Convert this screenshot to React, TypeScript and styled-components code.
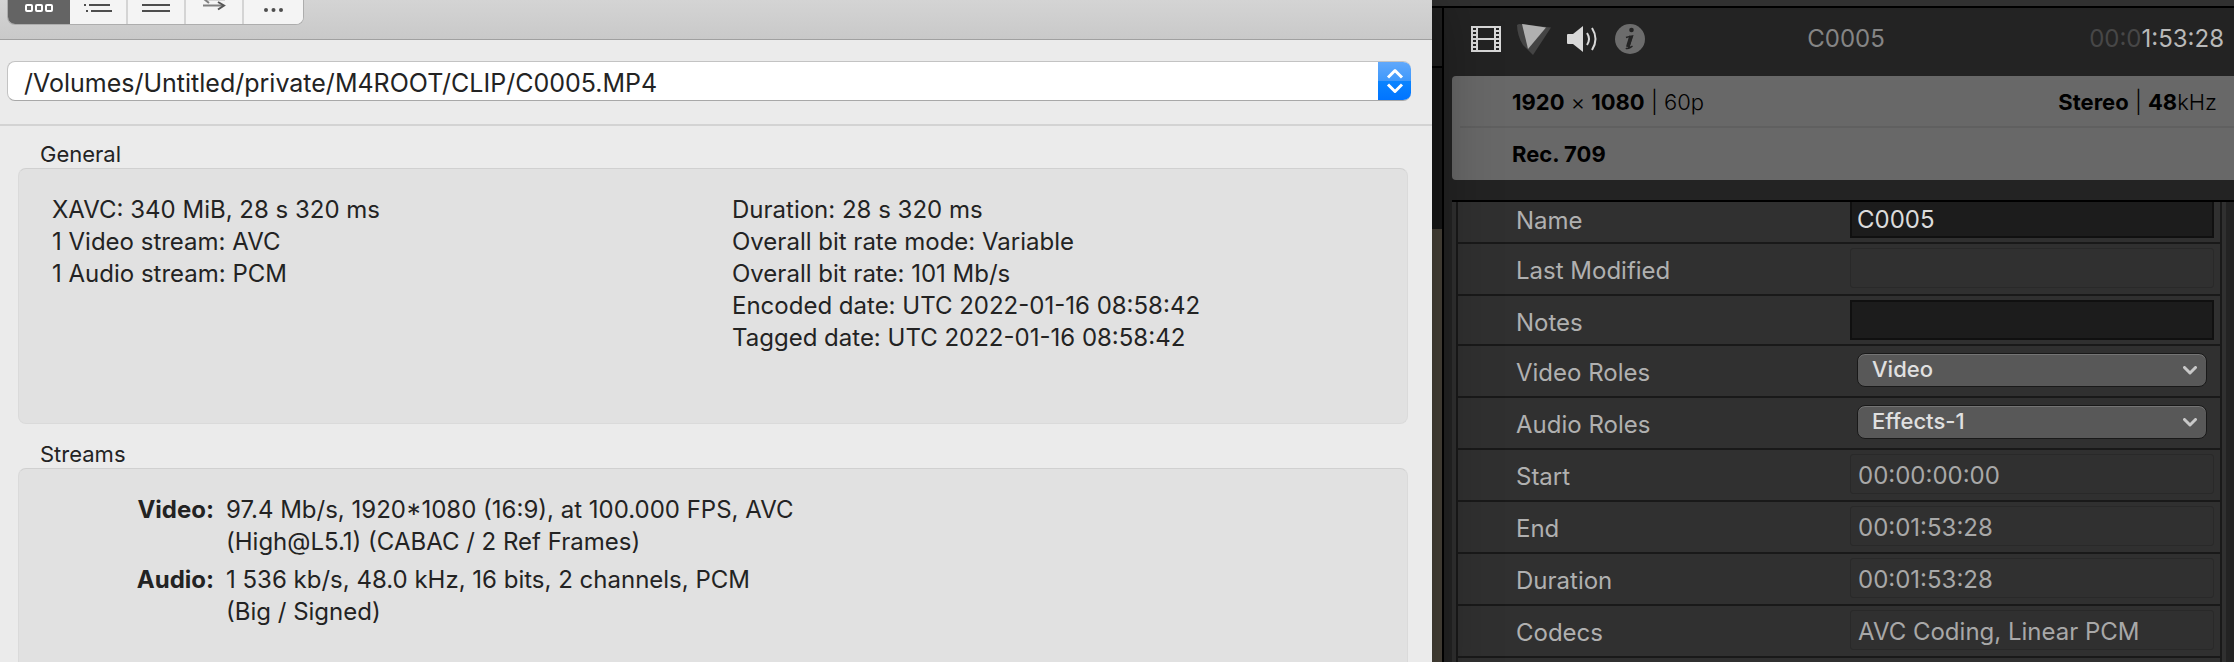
import React from "react";
import styled, { createGlobalStyle } from "styled-components";

const GlobalStyle = createGlobalStyle`
  *, *::before, *::after { box-sizing: border-box; }
  body { margin: 0; background: #232323; }
  button, input, select { font: inherit; color: inherit; margin: 0; padding: 0; border: 0; border-radius: 0; background: none; outline: none; }
  h1, h2, p, dl, dt, dd { margin: 0; font: inherit; }
`;

const Desktop = styled.div`
  display: grid;
  grid-template-columns: minmax(0, 179fr) 10px minmax(0, 99fr);
  height: 100vh;
  overflow: hidden;
  font-family: Inter, "Liberation Sans", sans-serif;
  font-size: 24px;
  line-height: 32px;
`;

/* Media info window */

const InfoWindow = styled.main`
  display: flex;
  flex-direction: column;
  position: relative;
  z-index: 1;
  background: #ebebeb;
  color: #232323;
  box-shadow: 0 0 60px rgba(0, 0, 0, 0.4);
`;

const Toolbar = styled.header`
  flex: none;
  height: 40px;
  padding-left: 7px;
  border-bottom: 1px solid #a0a0a0;
  background: linear-gradient(#d4d4d4, #c9c9c9);
`;

const Segments = styled.div`
  display: flex;
  width: 297px;
  height: 25px;
  overflow: hidden;
  border: 1px solid #adadad;
  border-top: 0;
  border-radius: 0 0 8px 8px;
  background: #f4f4f4;
`;

const Segment = styled.button<{ $active?: boolean }>`
  flex: none;
  width: 58px;
  display: flex;
  justify-content: center;
  background: ${(p) => (p.$active ? "#646464" : "#f4f4f4")};
  color: ${(p) => (p.$active ? "#fff" : "#4e4e4e")};
  & + & { border-right: 2px solid #d4d4d4; }
  &:first-child { width: 62px; }
  &:last-child { flex: 1; border-right: 0; }
`;

const PathBar = styled.div`
  flex: none;
  padding: 21px 21px 23px 7px;
  border-bottom: 2px solid #d3d3d3;
`;

const PathCombo = styled.div`
  display: flex;
  height: 40px;
  overflow: hidden;
  border: 1px solid #c3c3c3;
  border-bottom-color: #a8a8a8;
  border-right: 0;
  border-radius: 8px;
  background: #fff;
`;

const PathInput = styled.input`
  flex: 1;
  min-width: 0;
  padding: 4px 16px 0;
  font-size: 25px;
`;

const PathButton = styled.button`
  width: 33px;
  margin: -1px 0;
  display: flex;
  align-items: center;
  justify-content: center;
  background: linear-gradient(#62a9fb 0%, #3f98fb 50%, #0a84ff 50%, #0073ff 100%);
`;

const Group = styled.section<{ $fill?: boolean }>`
  display: flex;
  flex-direction: column;
  flex: ${(p) => (p.$fill ? "1 0 auto" : "none")};
  padding: ${(p) => (p.$fill ? "16px" : "14px")} 24px 0 18px;
`;

const GroupTitle = styled.h2`
  padding-left: 22px;
  font-size: 22px;
  line-height: 28px;
`;

const GroupBox = styled.div<{ $open?: boolean }>`
  flex: 1;
  min-height: ${(p) => (p.$open ? "194px" : "256px")};
  padding: 25px 33px 0;
  border: 1px solid #dadada;
  border-top-color: #d0d0d0;
  border-bottom-width: ${(p) => (p.$open ? "0" : "1px")};
  border-radius: ${(p) => (p.$open ? "8px 8px 0 0" : "8px")};
  background: #e1e1e1;
`;

const Columns = styled(GroupBox)`
  display: grid;
  grid-template-columns: 1fr 1fr;
  column-gap: 38px;
`;

const StreamList = styled.dl`
  display: grid;
  grid-template-columns: 162px 600px;
  column-gap: 12px;
  row-gap: 6px;
`;

const StreamName = styled.dt`
  font-weight: 700;
  text-align: right;
`;

/* Gap where the viewer behind shows through */

const ViewerEdge = styled.div`
  display: flex;
  flex-direction: column;
  background: #4a443a;
`;

const ViewerTop = styled.div`
  height: 8px;
  border-bottom: 2px solid #000;
  background: #303030;
`;

const ViewerBar = styled.div`
  height: 60px;
  border-bottom: 2px solid #000;
  background: #202020;
`;

const ViewerBlank = styled.div`
  height: 161px;
  background: #181818;
`;

/* Inspector */

const Inspector = styled.aside`
  display: flex;
  flex-direction: column;
  min-width: 0;
  background: #232323;
  color: #b0b0b0;
`;

const InspectorEdge = styled.div`
  flex: none;
  height: 8px;
  border-bottom: 2px solid #000;
  background: #303030;
`;

const InspectorBody = styled.div`
  flex: 1;
  min-height: 0;
  display: flex;
  flex-direction: column;
  padding-left: 8px;
  border-left: 2px solid #000;
`;

const InspectorHeader = styled.div`
  flex: none;
  display: grid;
  grid-template-columns: 1fr auto 1fr;
  align-items: center;
  height: 68px;
  padding: 0 10px 6px 16px;
`;

const Tabs = styled.div`
  display: flex;
  gap: 12px;
  button { display: flex; width: 36px; align-items: center; justify-content: center; }
`;

const ClipTitle = styled.h1`
  color: #858585;
`;

const Timecode = styled.div`
  justify-self: end;
  color: #b9b9b9;
  span { color: #474747; }
`;

const Summary = styled.div`
  flex: none;
  padding: 0 0 0 8px;
  border-radius: 4px 0 0 4px;
  background: #686868;
  color: #000;
  font-size: 22px;
  font-weight: 300;
`;

const SummaryRow = styled.div`
  display: flex;
  justify-content: space-between;
  height: 52px;
  padding: 10px 17px 0 52px;
  & + & { border-top: 2px solid #606060; margin-top: -2px; height: 54px; }
  strong { font-weight: 700; }
`;

const Properties = styled.div`
  flex: 1;
  min-height: 0;
  overflow: hidden;
  margin-top: 20px;
  border-top: 2px solid #000;
`;

/* The list is scrolled a little, so its first row starts above the top line. */
const PropertyList = styled.div`
  margin: -8px 8px 0 0;
  padding: 0 4px;
  background: #303030;
`;

const PropertyFrame = styled.div`
  border: 2px solid #191919;
  border-width: 0 2px;
`;

const PropertyRow = styled.div<{ $short?: boolean }>`
  display: grid;
  grid-template-columns: minmax(0, 392fr) minmax(0, 364fr);
  height: ${(p) => (p.$short ? "50px" : "52px")};
  padding-right: 6px;
  border-bottom: 2px solid #191919;
`;

const PropertyLabel = styled.label`
  padding: 11px 0 0 58px;
`;

const Field = styled.input<{ $editable?: boolean }>`
  height: 40px;
  margin-top: 4px;
  padding: 2px ${(p) => (p.$editable ? "5px" : "7px")} 0;
  border: ${(p) => (p.$editable ? "2px solid #101010" : "1px solid #292929")};
  border-radius: ${(p) => (p.$editable ? "0" : "3px")};
  background: ${(p) => (p.$editable ? "#1c1c1c" : "#303030")};
  color: ${(p) => (p.$editable ? "#dcdcdc" : "#a8a8a8")};
`;

const SelectWrap = styled.div`
  position: relative;
  height: 34px;
  margin: 7px 7px 0;
  svg { position: absolute; right: 10px; top: 13px; pointer-events: none; }
`;

const Select = styled.select`
  appearance: none;
  width: 100%;
  height: 34px;
  padding: 0 36px 2px 14px;
  border: 1px solid #191919;
  border-radius: 8px;
  background: #585858;
  box-shadow: inset 0 1px 0 #747474;
  color: #e0e0e0;
  font-size: 22px;
  font-weight: 500;
  line-height: 28px;
`;

const GridIcon = () => (
  <svg width="32" height="16" viewBox="0 0 32 16" fill="none" stroke="currentColor" strokeWidth="2">
    <rect x="3" y="5" width="6" height="6" rx="1" />
    <rect x="13" y="5" width="6" height="6" rx="1" />
    <rect x="23" y="5" width="6" height="6" rx="1" />
  </svg>
);

const ListIcon = () => (
  <svg width="28" height="16" viewBox="0 0 28 16" fill="currentColor">
    <path d="M0 4h2v2H0zM5 4h21v2H5zM2 10h2v2H2zM7 10h21v2H7z" />
  </svg>
);

const LinesIcon = () => (
  <svg width="28" height="16" viewBox="0 0 28 16" fill="currentColor">
    <path d="M0 4h28v2H0zM0 10h28v2H0z" />
  </svg>
);

const SwapIcon = () => (
  <svg width="24" height="16" viewBox="0 0 24 16" fill="none" stroke="#808080" strokeWidth="1">
    <path d="M5 0h18" stroke="#b5b5b5" />
    <path d="M2-1l5 4M1 5.500h20" strokeWidth="2" />
    <path d="M16 2l6 3.500-6 4" stroke="#555" strokeWidth="2" />
  </svg>
);

const DotsIcon = () => (
  <svg width="22" height="16" viewBox="0 0 22 16" fill="currentColor">
    <circle cx="3" cy="10" r="2" />
    <circle cx="10.500" cy="10" r="2" />
    <circle cx="18" cy="10" r="2" />
  </svg>
);

const UpDownIcon = () => (
  <svg width="18" height="26" viewBox="0 0 18 26" fill="none" stroke="#fff" strokeWidth="3">
    <path d="M2 9.500l7-7 7 7M2 16.500l7 7 7-7" strokeLinejoin="round" />
  </svg>
);

const FilmIcon = () => (
  <svg width="30" height="26" viewBox="0 0 30 26">
    <path
      fill="#d8d8d8"
      fillRule="evenodd"
      d="M0 0h30v26H0zM7 2v10h16V2zM7 14v10h16V14zM2 2v2h3V2zM2 6v2h3V6zM2 10v2h3v-2zM2 14v2h3v-2zM2 18v2h3v-2zM2 22v2h3v-2zM25 2v2h3V2zM25 6v2h3V6zM25 10v2h3v-2zM25 14v2h3v-2zM25 18v2h3v-2zM25 22v2h3v-2z"
    />
  </svg>
);

const ColorIcon = () => (
  <svg width="34" height="32" viewBox="0 0 34 32">
    <path d="M2 1L34 4.500 16 32 6 22C2 16 0 8 0 2z" fill="#444" />
    <path d="M5 1L29 4.500 11 26z" fill="#b0b0b0" />
  </svg>
);

const SpeakerIcon = () => (
  <svg width="30" height="26" viewBox="0 0 30 26" fill="none" stroke="#d8d8d8" strokeWidth="2">
    <path d="M0 9q0-1 1-1h5l10-8v26L6 18H1q-1 0-1-1z" fill="#d8d8d8" stroke="none" />
    <path d="M20 7q4 6 0 12M25 2q7 11 0 22" />
  </svg>
);

const InfoIcon = () => (
  <svg width="30" height="30" viewBox="0 0 30 30">
    <circle cx="15" cy="15" r="15" fill="#6c6c6c" />
    <circle cx="16.500" cy="6" r="2.300" fill="#232323" />
    <path d="M11 13.500q3-1 6.500-1.500L14 22.500q-1 3 3.500-.5M11 24q1 1.500 5-1" fill="none" stroke="#232323" strokeWidth="1.500" />
    <path d="M16 12l-3.300 11" stroke="#232323" strokeWidth="3.500" />
  </svg>
);

const ChevronIcon = () => (
  <svg width="14" height="10" viewBox="0 0 14 10" fill="none" stroke="#c8c8c8" strokeWidth="3">
    <path d="M1.500 1.500L7 7l5.500-5.500" strokeLinecap="round" strokeLinejoin="round" />
  </svg>
);

type Property = {
  label: string;
  value: string;
  kind?: "edit" | "menu";
  short?: boolean;
};

const properties: Property[] = [
  { label: "Name", value: "C0005", kind: "edit", short: true },
  { label: "Last Modified", value: "" },
  { label: "Notes", value: "", kind: "edit", short: true },
  { label: "Video Roles", value: "Video", kind: "menu" },
  { label: "Audio Roles", value: "Effects-1", kind: "menu" },
  { label: "Start", value: "00:00:00:00" },
  { label: "End", value: "00:01:53:28" },
  { label: "Duration", value: "00:01:53:28" },
  { label: "Codecs", value: "AVC Coding, Linear PCM" },
];

function PropertyItem({ label, value, kind, short }: Property) {
  const id = label.toLowerCase().replace(" ", "-");
  return (
    <PropertyRow $short={short}>
      <PropertyLabel htmlFor={id}>{label}</PropertyLabel>
      {kind === "menu" ? (
        <SelectWrap>
          <Select id={id} defaultValue={value}>
            <option>{value}</option>
          </Select>
          <ChevronIcon />
        </SelectWrap>
      ) : (
        <Field id={id} $editable={kind === "edit"} readOnly={kind !== "edit"} defaultValue={value} />
      )}
    </PropertyRow>
  );
}

export default function App() {
  return (
    <Desktop>
      <GlobalStyle />
      <InfoWindow>
        <Toolbar>
          <Segments>
            <Segment $active aria-label="Easy view"><GridIcon /></Segment>
            <Segment aria-label="List view"><ListIcon /></Segment>
            <Segment aria-label="Text view"><LinesIcon /></Segment>
            <Segment aria-label="Compare"><SwapIcon /></Segment>
            <Segment aria-label="More"><DotsIcon /></Segment>
          </Segments>
        </Toolbar>
        <PathBar>
          <PathCombo>
            <PathInput aria-label="File" defaultValue="/Volumes/Untitled/private/M4ROOT/CLIP/C0005.MP4" />
            <PathButton aria-label="Choose file"><UpDownIcon /></PathButton>
          </PathCombo>
        </PathBar>
        <Group>
          <GroupTitle>General</GroupTitle>
          <Columns>
            <div>
              <p>XAVC: 340 MiB, 28 s 320 ms</p>
              <p>1 Video stream: AVC</p>
              <p>1 Audio stream: PCM</p>
            </div>
            <div>
              <p>Duration: 28 s 320 ms</p>
              <p>Overall bit rate mode: Variable</p>
              <p>Overall bit rate: 101 Mb/s</p>
              <p>Encoded date: UTC 2022-01-16 08:58:42</p>
              <p>Tagged date: UTC 2022-01-16 08:58:42</p>
            </div>
          </Columns>
        </Group>
        <Group $fill>
          <GroupTitle>Streams</GroupTitle>
          <GroupBox $open>
            <StreamList>
              <StreamName>Video:</StreamName>
              <dd>97.4 Mb/s, 1920*1080 (16:9), at 100.000 FPS, AVC (High@L5.1) (CABAC / 2 Ref Frames)</dd>
              <StreamName>Audio:</StreamName>
              <dd>1 536 kb/s, 48.0 kHz, 16 bits, 2 channels, PCM<br />(Big / Signed)</dd>
            </StreamList>
          </GroupBox>
        </Group>
      </InfoWindow>
      <ViewerEdge>
        <ViewerTop />
        <ViewerBar />
        <ViewerBlank />
      </ViewerEdge>
      <Inspector>
        <InspectorEdge />
        <InspectorBody>
          <InspectorHeader>
            <Tabs>
              <button aria-label="Video"><FilmIcon /></button>
              <button aria-label="Color"><ColorIcon /></button>
              <button aria-label="Audio"><SpeakerIcon /></button>
              <button aria-label="Info"><InfoIcon /></button>
            </Tabs>
            <ClipTitle>C0005</ClipTitle>
            <Timecode><span>00:0</span>1:53:28</Timecode>
          </InspectorHeader>
          <Summary>
            <SummaryRow>
              <div><strong>1920</strong> × <strong>1080</strong> | 60p</div>
              <div><strong>Stereo</strong> | <strong>48</strong>kHz</div>
            </SummaryRow>
            <SummaryRow>
              <strong>Rec. 709</strong>
            </SummaryRow>
          </Summary>
          <Properties>
            <PropertyList>
              <PropertyFrame>
                {properties.map((p) => (
                  <PropertyItem key={p.label} {...p} />
                ))}
                <PropertyRow />
              </PropertyFrame>
            </PropertyList>
          </Properties>
        </InspectorBody>
      </Inspector>
    </Desktop>
  );
}
